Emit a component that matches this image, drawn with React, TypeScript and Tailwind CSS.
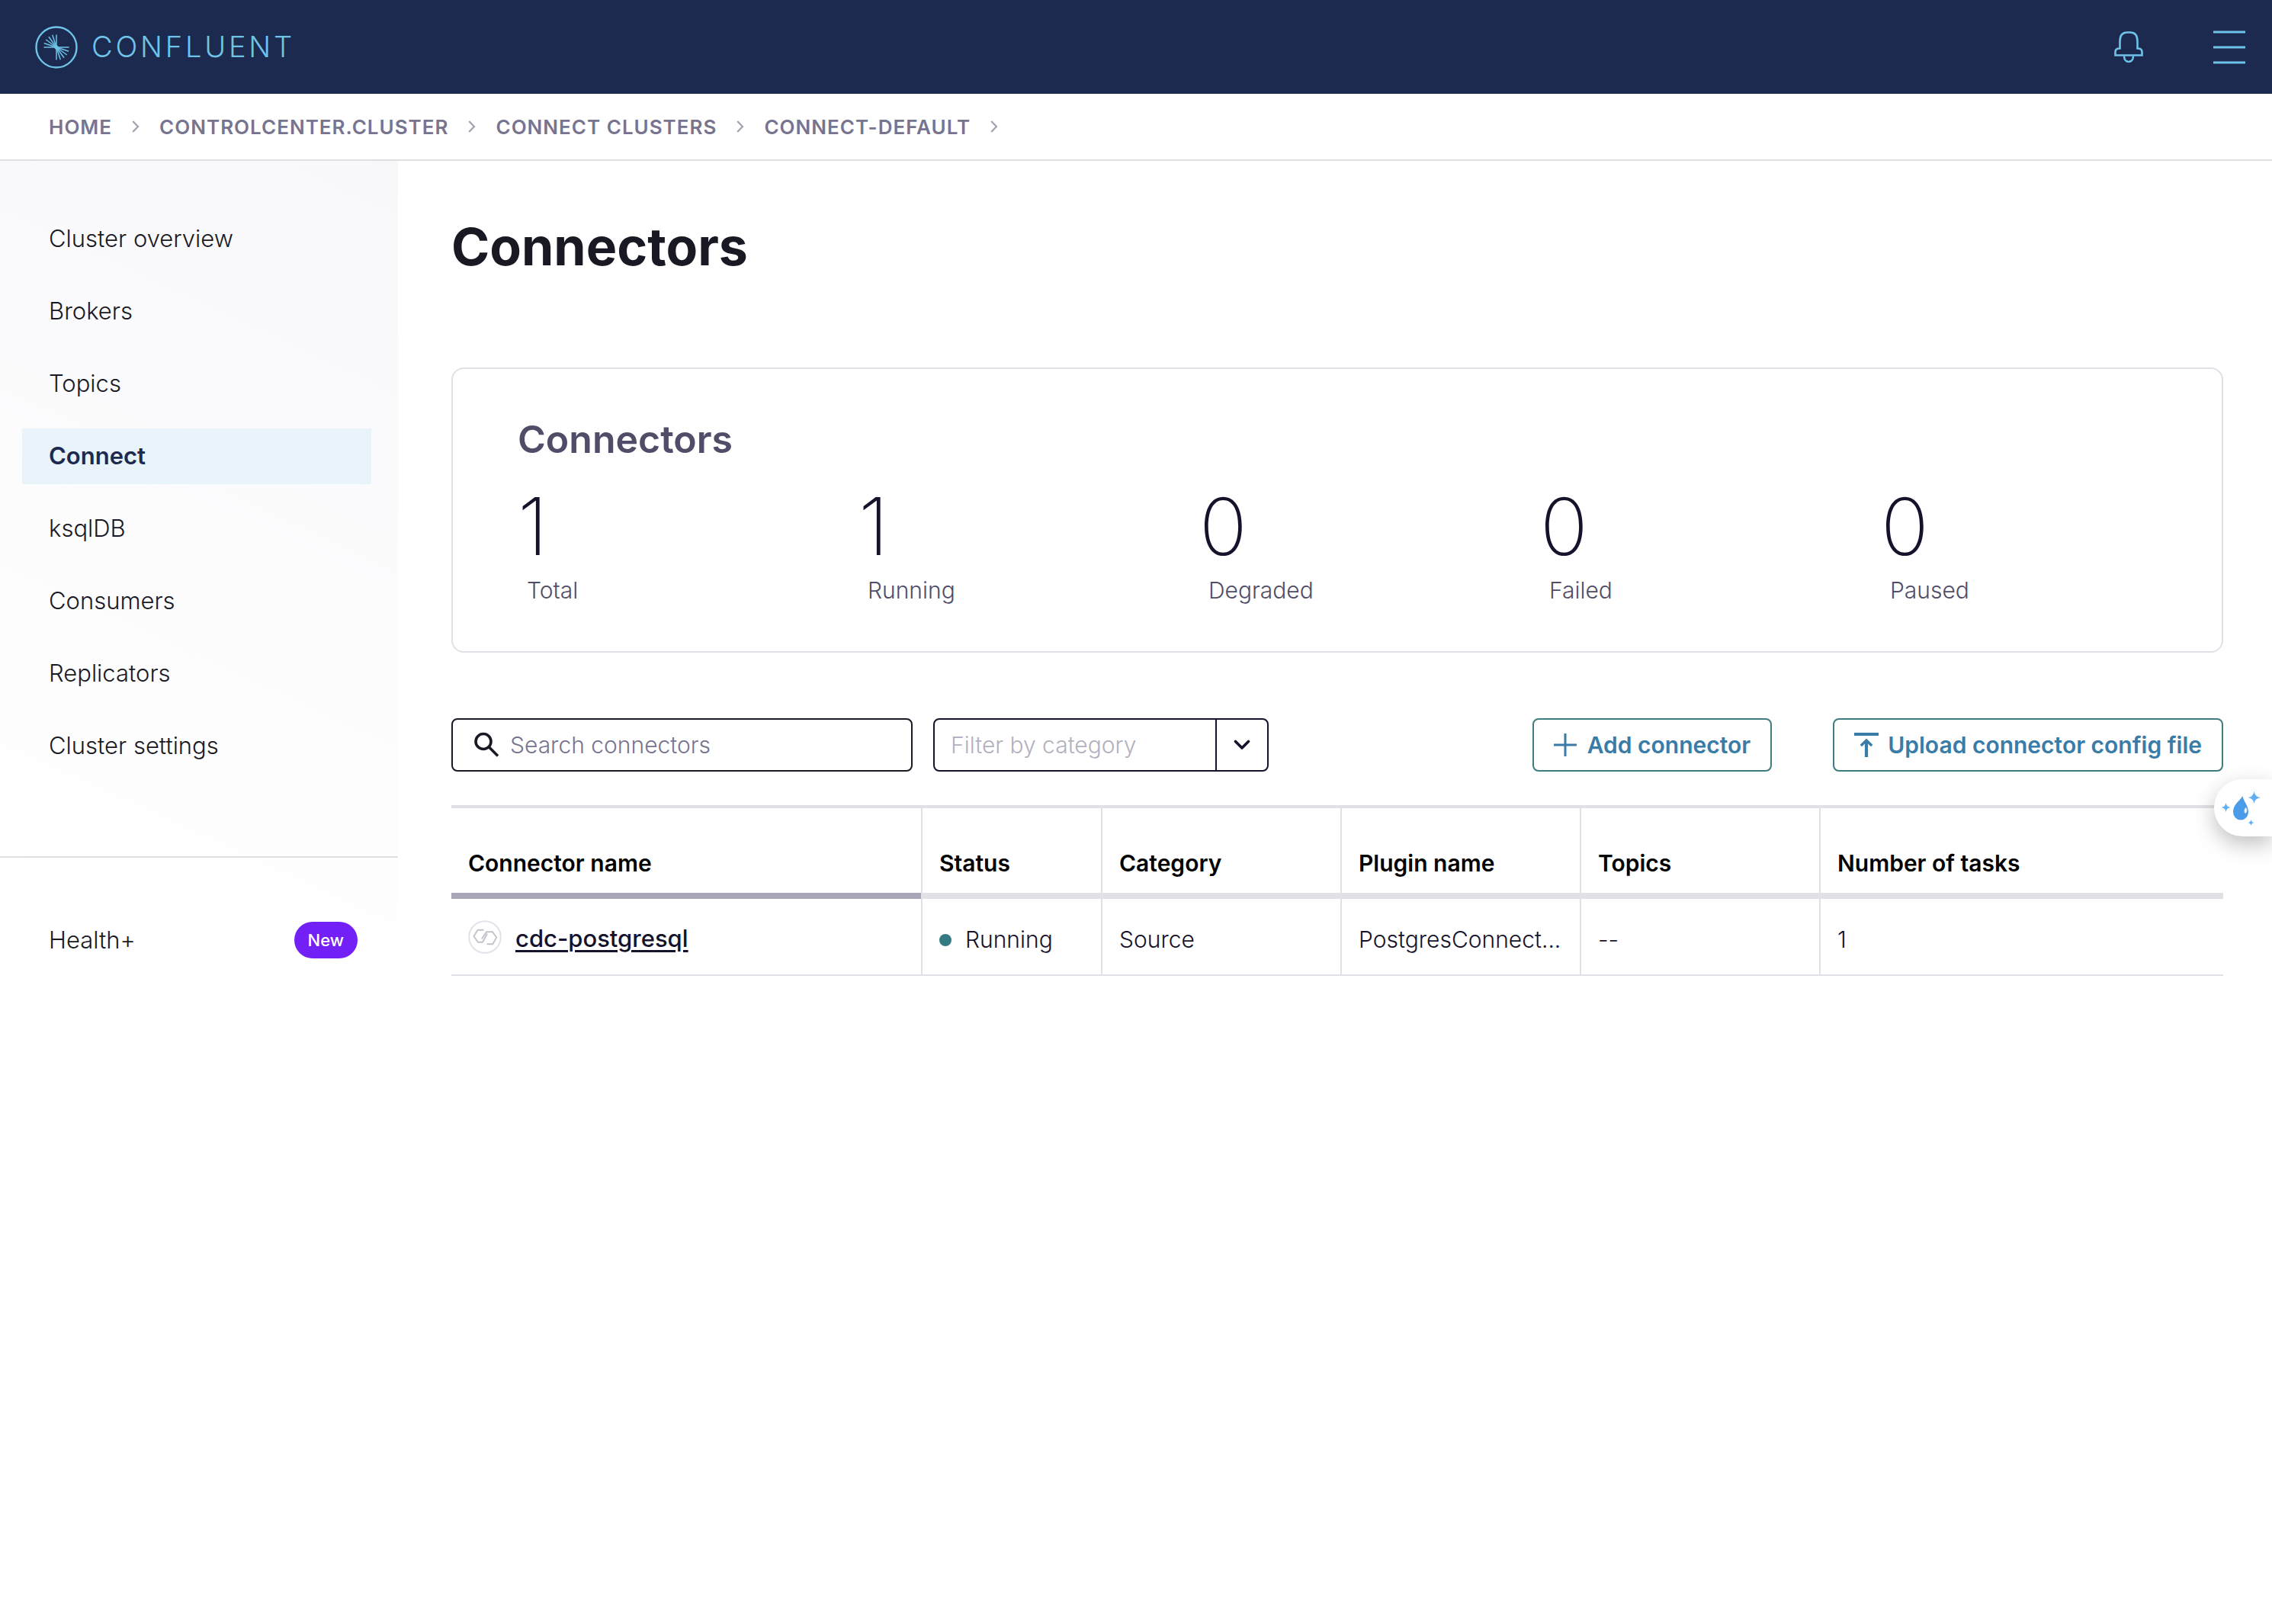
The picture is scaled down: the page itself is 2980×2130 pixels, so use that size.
import React from 'react';

const crumbs = ['HOME', 'CONTROLCENTER.CLUSTER', 'CONNECT CLUSTERS', 'CONNECT-DEFAULT'];

const navItems = [
  'Cluster overview',
  'Brokers',
  'Topics',
  'Connect',
  'ksqlDB',
  'Consumers',
  'Replicators',
  'Cluster settings',
];

const stats = [
  { value: 1, label: 'Total' },
  { value: 1, label: 'Running' },
  { value: 0, label: 'Degraded' },
  { value: 0, label: 'Failed' },
  { value: 0, label: 'Paused' },
];

function LogoMark() {
  const rays = [18, 36, 54, 72];
  return (
    <svg className="size-14" viewBox="0 0 56 56" fill="none" stroke="currentColor" aria-hidden="true">
      <circle cx="28" cy="28" r="26.5" strokeWidth="2.4" />
      <path d="M11.5 28H44.5M28 11.5V44.5" strokeWidth="1.5" />
      {rays.map((a) => {
        const c = Math.cos((a * Math.PI) / 180);
        const s = Math.sin((a * Math.PI) / 180);
        return (
          <path
            key={a}
            strokeWidth="1.5"
            d={`M${28 - 17 * c} ${28 - 17 * s}L28 28L${28 + 17 * c} ${28 + 17 * s}`}
          />
        );
      })}
      <circle cx="28" cy="28" r="2.6" fill="currentColor" stroke="none" />
    </svg>
  );
}

function BellIcon() {
  return (
    <svg className="h-[42px] w-10" viewBox="0 0 40 42" fill="none" stroke="currentColor" strokeWidth="2.6" aria-hidden="true">
      <path d="M2.500 31.500V27Q2.500 22.500 8.500 22.500V13Q8.500 1.500 18 1.500H22Q31.500 1.500 31.500 13V22.500Q37.500 22.500 37.500 27V31.500Z" />
      <path d="M14 32.500C14 37 16.500 40 20 40S26 37 26 32.500" />
    </svg>
  );
}

function MenuIcon() {
  return (
    <svg className="h-11 w-[42px]" viewBox="0 0 42 44" fill="none" stroke="currentColor" strokeWidth="3" aria-hidden="true">
      <path d="M0 2H42M0 22H42M0 42H42" />
    </svg>
  );
}

function CrumbArrow() {
  return (
    <svg className="h-4 w-[10px] text-[#a3a1b0]" viewBox="0 0 10 16" fill="none" stroke="currentColor" strokeWidth="2.2" aria-hidden="true">
      <path d="M1.200 1L8 8L1.200 15" />
    </svg>
  );
}

function SearchIcon() {
  return (
    <svg className="size-[34px] shrink-0 text-[#191924]" viewBox="0 0 34 34" fill="none" stroke="currentColor" strokeWidth="3.6" aria-hidden="true">
      <circle cx="13" cy="12.500" r="10" />
      <path d="M20 19.500L32 31.500" />
    </svg>
  );
}

function ChevronDown() {
  return (
    <svg className="h-3.5 w-[22px]" viewBox="0 0 22 14" fill="none" stroke="currentColor" strokeWidth="3.600" strokeLinejoin="round" strokeLinecap="round" aria-hidden="true">
      <path d="M2.500 2.500L11 11L19.500 2.500" />
    </svg>
  );
}

function PlusIcon() {
  return (
    <svg className="size-[30px]" viewBox="0 0 30 30" fill="none" stroke="currentColor" strokeWidth="3" aria-hidden="true">
      <path d="M0 15H30M15 0V30" />
    </svg>
  );
}

function UploadIcon() {
  return (
    <svg className="size-8" viewBox="0 0 32 32" fill="none" stroke="currentColor" aria-hidden="true">
      <path d="M0 2H32" strokeWidth="4" />
      <path d="M16 32V10" strokeWidth="4.200" />
      <path d="M8.800 17L16 10L23.200 17" strokeWidth="3.400" />
    </svg>
  );
}

function ConnectorIcon() {
  return (
    <svg className="size-11 shrink-0" viewBox="0 0 44 44" fill="none" aria-hidden="true">
      <circle cx="22" cy="22" r="20.800" stroke="#e3e2ea" strokeWidth="2" />
      <path
        d="M20.500 12.700H12.500L7.500 21L13 28.800H19L25 17.500M17.800 24.500L24 15.300H32L37.200 22.500L32.300 31.200H24.500"
        stroke="#c3c2cc"
        strokeWidth="1.900"
      />
    </svg>
  );
}

function DropIcon() {
  return (
    <svg className="h-12 w-[54px]" viewBox="0 0 54 48" aria-hidden="true">
      <path d="M29.500 8C30 14 37 20 37 29A10 10.500 0 0 1 17 29C17 19 26 14 29.500 8Z" fill="#4a9be8" />
      <path d="M34 23C31 25 31 29 33 31C35.500 29.500 36 26 34 23Z" fill="#e8f4ff" />
      <g fill="#62aef0">
        <path d="M44.500 2Q45.500 9 53 10Q45.500 11 44.500 18Q43.500 11 36.500 10Q43.500 9 44.500 2Z" />
        <path d="M7.500 17Q8.200 22.300 13.500 23Q8.200 23.700 7.500 29Q6.800 23.700 1.500 23Q6.800 22.300 7.500 17Z" />
        <path d="M40.500 39Q41 42.500 44.500 43Q41 43.500 40.500 47Q40 43.500 36.500 43Q40 42.500 40.500 39Z" />
      </g>
    </svg>
  );
}

function Header() {
  return (
    <header className="flex h-[123px] items-center justify-between bg-[#1b2a4e] pr-[35px] pl-[46px] text-[#6fc3e8]">
      <a href="#" className="flex items-center gap-[18px]">
        <LogoMark />
        <span className="text-[38px] font-light tracking-widest">CONFLUENT</span>
      </a>
      <div className="flex items-center gap-[91px]">
        <button type="button" aria-label="Notifications">
          <BellIcon />
        </button>
        <button type="button" aria-label="Menu">
          <MenuIcon />
        </button>
      </div>
    </header>
  );
}

function Breadcrumbs() {
  return (
    <nav aria-label="Breadcrumb" className="border-b-2 border-[#e0e0e3]">
      <ol className="flex h-[86px] items-center gap-[26px] pl-16 text-[26px] font-semibold text-[#77748f]">
        {crumbs.map((c) => (
          <li key={c} className="flex items-center gap-[26px]">
            <a href="#" className="tracking-[1px]">{c}</a>
            <CrumbArrow />
          </li>
        ))}
      </ol>
    </nav>
  );
}

function Sidebar() {
  return (
    <aside className="w-[522px] shrink-0 bg-linear-205 from-[#f8f8fb] via-white via-55% to-white text-[31px] font-light text-[#191924]">
      <ul className="flex flex-col gap-[22px] pt-[66px] pr-[35px] pb-[108px] pl-[29px]">
        {navItems.map((item) => (
          <li key={item}>
            <a
              href="#"
              className={
                item === 'Connect'
                  ? 'flex h-[73px] items-center bg-[#e8f3fa] px-[35px] font-semibold text-[#1b2a4e]'
                  : 'flex h-[73px] items-center px-[35px]'
              }
            >
              {item}
            </a>
          </li>
        ))}
      </ul>
      <div className="border-t-2 border-[#e0e0e3] pt-[84px] pr-[53px] pl-16">
        <a href="#" className="flex items-center justify-between">
          Health+
          <span className="flex h-12 items-center rounded-full bg-[#7220f5] px-[18px] text-[22px] font-medium text-white">
            New
          </span>
        </a>
      </div>
    </aside>
  );
}

function StatsCard() {
  return (
    <section className="mt-[119px] h-[374px] rounded-2xl border-2 border-[#e0e0e6] pt-[62px] pl-[85px]">
      <h2 className="text-[50px] leading-[60px] font-semibold text-[#504d68]">Connectors</h2>
      <dl className="mt-6 grid grid-cols-5">
        {stats.map((s) => (
          <div key={s.label} className="flex flex-col-reverse">
            <dt className="pl-3 text-[30px] leading-10 font-light text-[#504d68]">{s.label}</dt>
            <dd className="pb-1 text-[104px] leading-[120px] font-extralight text-[#15132b]">{s.value}</dd>
          </div>
        ))}
      </dl>
    </section>
  );
}

function Toolbar() {
  return (
    <div className="mt-[86px] flex items-center">
      <label className="flex h-[70px] w-[605px] items-center gap-3.5 rounded-lg border-2 border-[#191924] pl-[27px]">
        <SearchIcon />
        <input
          type="text"
          aria-label="Search connectors"
          placeholder="Search connectors"
          className="w-full bg-transparent text-[30px] font-light outline-none placeholder:text-[#77748f]"
        />
      </label>
      <div className="relative ml-[27px] h-[70px] w-[440px] rounded-lg border-2 border-[#15132b]">
        <select
          aria-label="Filter by category"
          defaultValue=""
          className="size-full appearance-none bg-transparent pl-[21px] text-[30px] font-light text-[#b3b1c0] outline-none"
        >
          <option value="">Filter by category</option>
          <option value="source">Source</option>
          <option value="sink">Sink</option>
        </select>
        <span className="pointer-events-none absolute inset-y-0 right-0 flex w-[68px] items-center justify-center border-l-2 border-[#15132b] text-[#15132b]">
          <ChevronDown />
        </span>
      </div>
      <div className="ml-auto flex gap-20 text-[30px] font-semibold text-[#3a7ca8]">
        <button type="button" className="flex h-[70px] items-center gap-3.5 rounded-lg border-2 border-[#3e7c80] px-[26px]">
          <PlusIcon />
          Add connector
        </button>
        <button type="button" className="flex h-[70px] items-center gap-3 rounded-lg border-2 border-[#3e7c80] px-[26px]">
          <UploadIcon />
          Upload connector config file
        </button>
      </div>
    </div>
  );
}

const headCell = 'border-t-4 border-b-8 border-[#e0e0e6] border-l-2 pt-[34px] pl-[22px] text-left font-semibold';
const bodyCell = 'border-b-2 border-l-2 border-[#e0e0e6] whitespace-nowrap pt-2 pl-[22px]';

function ConnectorsTable() {
  return (
    <table className="mt-11 w-full table-fixed border-separate border-spacing-0 text-[30px]">
      <colgroup>
        <col className="w-[616px]" />
        <col className="w-[236px]" />
        <col className="w-[314px]" />
        <col className="w-[314px]" />
        <col className="w-[314px]" />
        <col />
      </colgroup>
      <thead>
        <tr className="h-[123px] text-black">
          <th scope="col" className="border-t-4 border-b-8 border-t-[#e0e0e6] border-b-[#a7a5b6] pt-[34px] pl-[22px] text-left font-semibold">
            Connector name
          </th>
          <th scope="col" className={headCell}>Status</th>
          <th scope="col" className={headCell}>Category</th>
          <th scope="col" className={headCell}>Plugin name</th>
          <th scope="col" className={headCell}>Topics</th>
          <th scope="col" className={headCell}>Number of tasks</th>
        </tr>
      </thead>
      <tbody>
        <tr className="h-[101px] font-light text-[#15132b]">
          <td className="border-b-2 border-[#e0e0e6] pl-[22px]">
            <span className="flex items-center gap-[18px]">
              <ConnectorIcon />
              <a href="#" className="pt-1.5 text-[31px] font-medium underline decoration-[3px] underline-offset-4">
                cdc-postgresql
              </a>
            </span>
          </td>
          <td className={bodyCell}>
            <span className="flex items-center gap-[18px]">
              <span className="size-4 rounded-full bg-[#337a82]" />
              Running
            </span>
          </td>
          <td className={bodyCell}>Source</td>
          <td className={bodyCell}>PostgresConnect...</td>
          <td className={bodyCell}>--</td>
          <td className={bodyCell}>1</td>
        </tr>
      </tbody>
    </table>
  );
}

export default function App() {
  return (
    <div className="relative flex min-h-screen flex-col overflow-x-hidden bg-white font-['Inter',sans-serif]">
      <Header />
      <Breadcrumbs />
      <div className="flex flex-1">
        <Sidebar />
        <main className="min-w-0 flex-1 pr-16 pl-[70px]">
          <h1 className="pt-[72px] text-[68px] leading-[80px] font-bold text-[#191924]">Connectors</h1>
          <StatsCard />
          <Toolbar />
          <ConnectorsTable />
        </main>
      </div>
      <button
        type="button"
        aria-label="Assistant"
        className="absolute top-[1022px] right-0 flex h-[75px] w-[76px] items-center rounded-l-full bg-white pl-2 shadow-[0_10px_28px_rgba(0,0,0,0.25)]"
      >
        <DropIcon />
      </button>
    </div>
  );
}
